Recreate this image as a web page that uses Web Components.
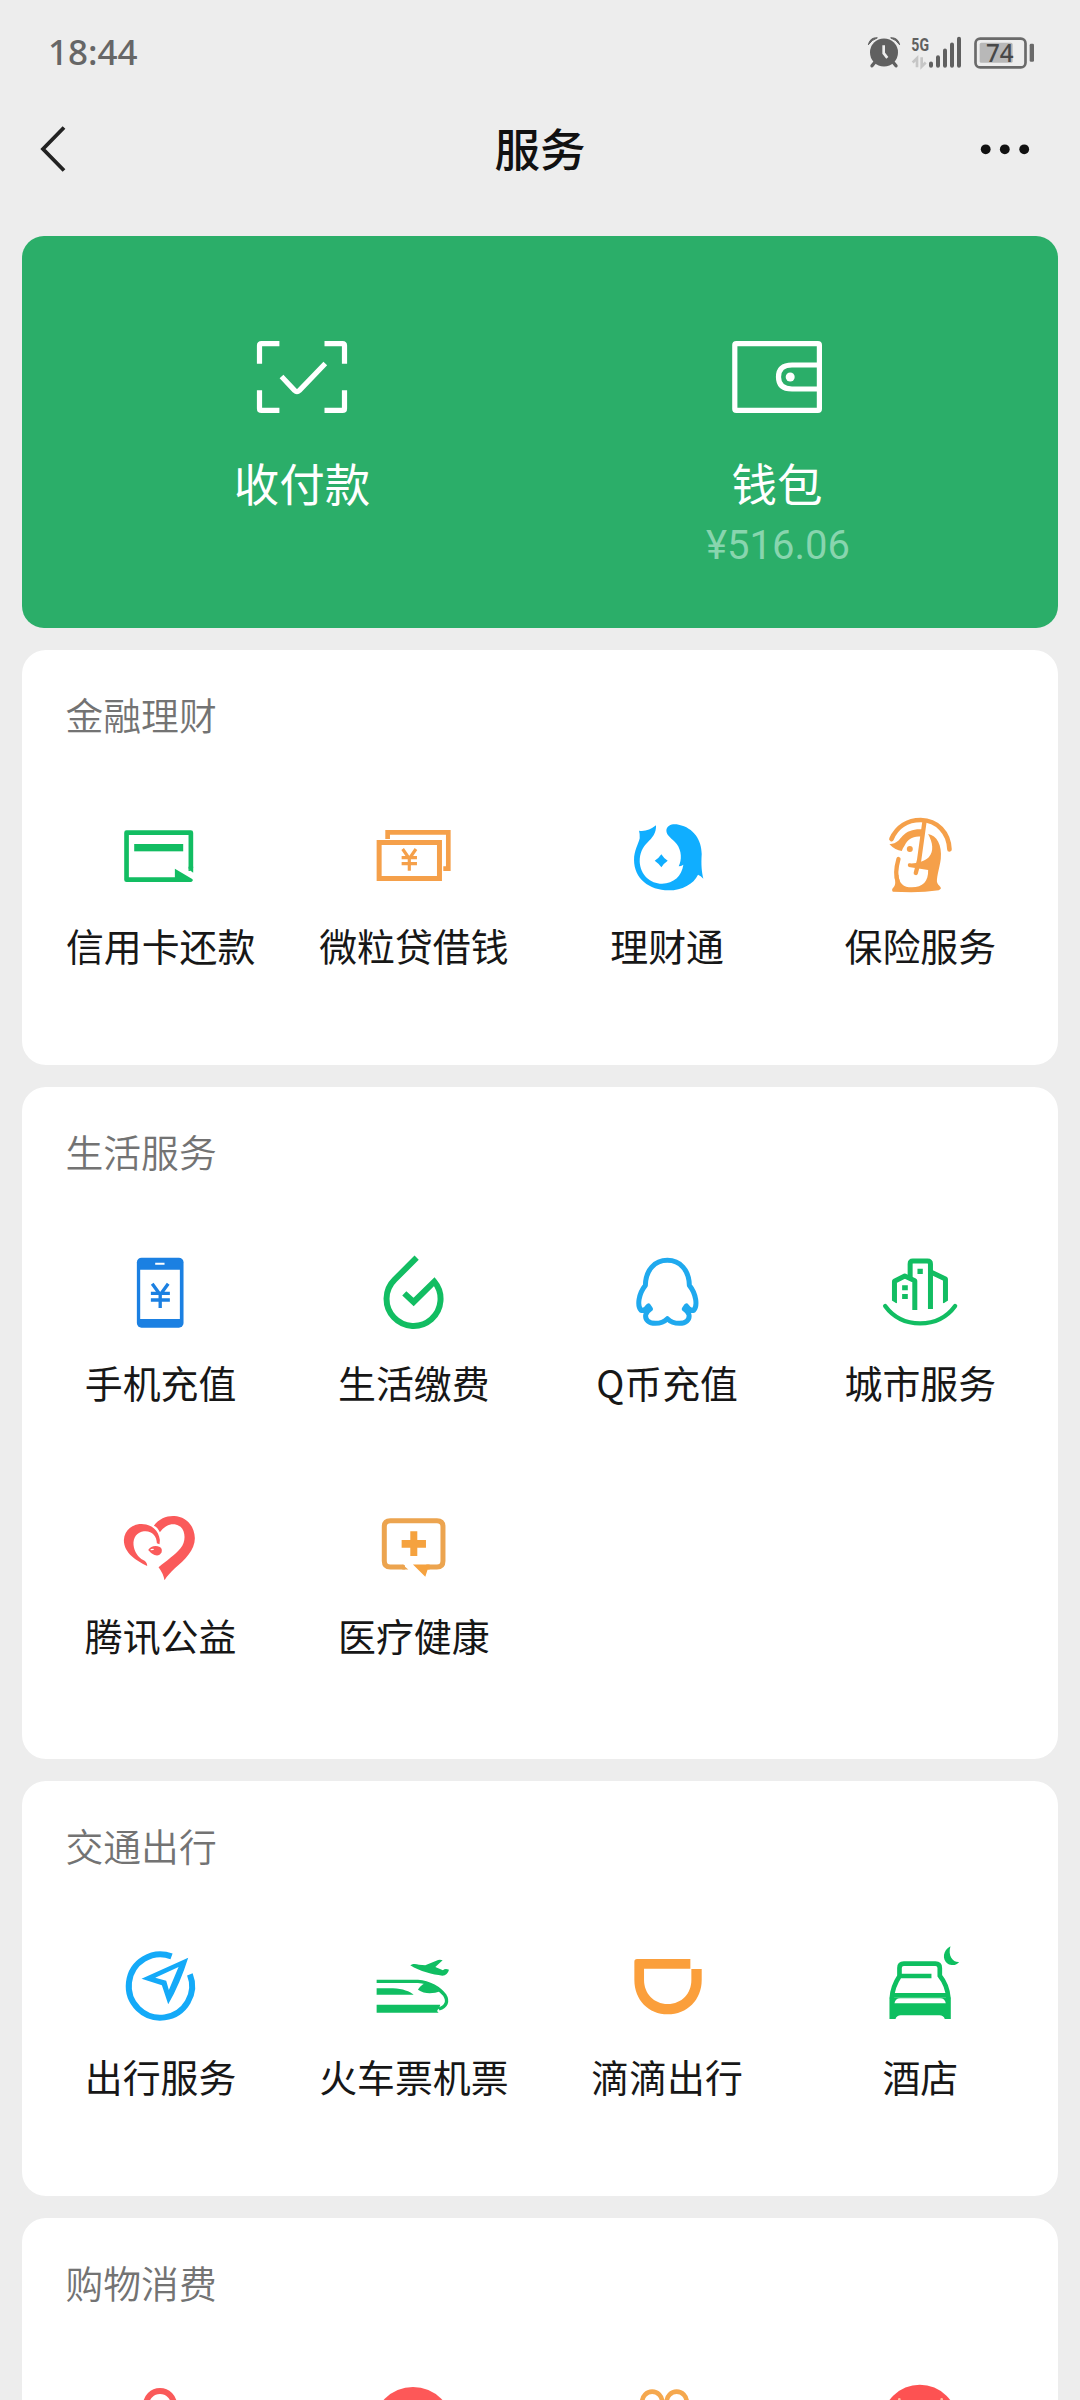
<!DOCTYPE html>
<html lang="zh-CN">
<head>
<meta charset="utf-8">
<title>服务</title>
<style>
html,body{margin:0;padding:0}
body{width:1080px;height:2400px;overflow:hidden;background:#ededed;font-family:"Noto Sans CJK SC",sans-serif;color:#171717}
</style>
</head>
<body>
<services-page></services-page>
<script>
const G='#12bd62', O='#f5a04a', B='#14aaf8', R='#fa5a5a';
// Each icon: [viewBox x, viewBox y, markup]; every viewBox is 288 units wide and high.
const ICONS={
card:[276.4,501,`<path d="M513 693V578H320V719H472" fill="none" stroke="${G}" stroke-width="14" stroke-linejoin="round"/><path d="M504 686l18 13v-16z" fill="#fff"/><path d="M506 680v8l14 10v-18z" fill="${G}"/><path d="M465 686V726H514Q522 722 517 717Z" fill="${G}"/><rect x="343" y="612" width="147" height="22" fill="${G}"/>`],
loan:[1036.1,501,`<g fill="none" stroke="${O}"><rect x="1078.5" y="607.5" width="181" height="108" stroke-width="15"/><path d="M1104 597V577H1286V686H1271" stroke-width="14"/><path d="M1149 627L1169 656L1189 627M1169 655V692M1146 653H1192M1146 671H1192" stroke-width="9.500"/></g>`],
fund:[175.9,81,`<path fill="#10aeff" d="M236 152Q262 156 287 136C288 160 275 174 262 187C246 203 238 220 238 245C240 285 270 311 305 311C340 310 364 288 369 254Q362 259 355 259C365 240 364 212 349 192C336 175 317 168 318 150C320 134 338 130 355 134C400 143 424 180 424 222C422 255 424 276 429 296Q421 287 413 284C400 312 365 331 325 331C266 331 221 295 221 240C221 212 234 192 238 175Q239 162 236 152Z"/><path fill="#10aeff" d="M303 223Q310 235 322 242Q310 250 303 262Q295 250 283 242Q295 235 303 223Z"/>`],
insure:[935.6,81,`<g fill="${O}"><path d="M994 177C1010 140 1042 120 1082 120C1132 121 1166 158 1168 208" fill="none" stroke="${O}" stroke-width="14" stroke-linecap="round"/><path d="M1015 237C1008 262 1004 285 1013 305" fill="none" stroke="${O}" stroke-width="13" stroke-linecap="round"/><path d="M988 193C1012 190 1016 180 1027 168C1042 152 1062 146 1088 148L1084 170C1060 166 1042 178 1034 196C1029 203 1027 208 1025 213C1012 212 1000 206 988 193Z"/><circle cx="1049" cy="207" r="9"/><path d="M1104 162C1130 166 1146 196 1142 236C1139 262 1126 300 1132 310C1136 318 1143 320 1142 326L1136 331C1090 338 1040 337 998 335C994 330 996 326 1001 321C1008 314 1004 300 1007 288L1015 284C1016 310 1030 322 1055 322C1088 322 1105 304 1104 270L1080 266L1046 261Q1040 255 1046 250C1066 252 1090 246 1106 232C1122 213 1118 188 1104 162Z"/><path d="M1093 125L1077 240L1067 279" fill="none" stroke="${O}" stroke-width="13" stroke-linecap="round"/></g>`],
phone:[156.4,42,`<rect x="231" y="83" width="140" height="210" rx="14" fill="#1b80e2"/><path fill="#fff" d="M241 119h119v148H241zM286 98h28v6h-28z"/><path d="M277 161L301 194L325 161M301 190V234M273 190H330M273 210H330" fill="none" stroke="#1b80e2" stroke-width="10"/>`],
drop:[916.1,42,`<path d="M1071 83L1005 149A81 81 0 1 0 1124 155L1062 216L1034 190" fill="none" stroke="${G}" stroke-width="18"/>`],
qq:[175.9,42,`<g fill="none" stroke="#1fa9ee" stroke-width="15" stroke-linejoin="round"><path d="M321 266C310 277 298 280 285 280C266 280 254 270 256 255C257 247 263 242 270 237L264 228C257 238 250 243 242 241C230 228 234 192 255 166C256 120 283 91 321 91C359 91 386 120 387 166C408 192 412 228 400 241C392 243 385 238 378 228L372 237C379 242 385 247 386 255C388 270 376 280 357 280C344 280 332 277 321 266Z"/></g>`],
city:[935.6,42,`<g fill="none" stroke="${G}" stroke-width="15"><path d="M975 228C1002 265 1040 280 1080 280C1120 280 1158 265 1185 228" stroke-width="13" stroke-linecap="round"/><path d="M1050 146V102Q1050 93 1058 93H1102Q1111 93 1111 102V237" /><path d="M1003 220V154L1034 138L1064 152V240M1112 126L1156 147V220" stroke-linejoin="round"/></g><path fill="${G}" d="M1072 116h16v16h-16zM1026 166h17v15h-17zM1026 192h17v15h-17z"/><path fill="#fff" d="M994 211l18 11v6h-18zM1147 222l18-11v17h-18z"/>`],
heart:[156.4,21,`<g fill="${R}"><path d="M262 228C230 212 192 190 192 150C194 118 220 102 245 102C275 102 297 122 300 150L299 163L291 160C291 138 275 121 252 124C232 127 219 142 221 165C223 185 235 203 250 210C258 214 262 220 262 228Z"/><path d="M282 107C298 86 320 77 343 78C380 80 404 108 405 145C405 180 375 210 345 235C332 247 322 258 314 271Q310 250 296 232C320 212 345 196 362 175C378 155 378 125 362 110C340 94 315 105 300 127C296 118 290 110 282 107Z"/><path d="M265 180C272 168 288 165 300 171C306 174 307 180 305 187C300 197 292 198 284 195C276 192 271 187 265 180Z"/></g><path d="M274 179L280 178" stroke="#fff" stroke-width="4" stroke-linecap="round"/>`],
medical:[916.1,21,`<path d="M1036 231H992Q974 231 974 213V110Q974 92 992 92H1132Q1150 92 1150 110V213Q1150 231 1132 231H1100" fill="none" stroke="#eca44f" stroke-width="15"/><path fill="#eca44f" d="M1028 223.5L1046 238.5H1028Z"/><path fill="#fff" d="M1031 222L1050 240V222Z"/><path fill="#f5a23f" d="M1060 223.5H1110V238.5H1104L1097 260ZM1052 124h21v26h26v23h-26v25h-21v-25h-26v-23h26z"/>`],
nav:[156.4,24,`<path d="M335 79A95 95 0 1 0 390 133" fill="none" stroke="${B}" stroke-width="18"/><path fill="${B}" fill-rule="evenodd" d="M385 83L245 146L306 166L325 223Q361 160 385 83ZM356 111L286 143L319 152L327 180Z"/>`],
train:[916.1,24,`<g fill="#10be62"><path d="M1052 106C1060 101 1068 102 1078 104L1097 106L1130 92Q1140 87 1149 91L1127 111L1150 121Q1156 114 1168 119Q1164 136 1148 137C1120 134 1080 124 1052 106Z"/><path d="M951 154H1075C1110 156 1140 175 1155 195C1167 214 1160 230 1138 237" fill="none" stroke="#10be62" stroke-width="10"/><path d="M1075 179C1085 165 1095 157 1110 160C1125 164 1135 172 1143 183C1120 192 1095 193 1075 179Z"/><path d="M951 175H1000C1030 176 1050 185 1062 194H951Z"/><path d="M951 224H1142L1138 236Q1128 242 1137 248H951Z"/></g>`],
didi:[175.9,24,`<path fill="#fb9f3b" d="M222 95Q222 87 230 87H390V116H251V150C251 190 280 222 322 222C365 222 393 190 393 150V117H424V150C424 210 380 253 322 253C265 253 222 210 222 150Z"/>`],
hotel:[935.6,24,`<g fill="#0ebf60"><path d="M1171 49C1148 60 1145 90 1163 101C1177 109 1190 105 1197 96C1180 98 1162 80 1171 49Z"/><path d="M1018 142V114Q1018 101 1031 101H1126Q1139 101 1139 114V137Q1162 165 1165 205M1019 137Q997 170 995 205M1000 196H1162M1022 138H1114" fill="none" stroke="#0ebf60" stroke-width="14"/><path d="M988 203H1172V267H1154Q1150 256 1138 256H1022Q1010 256 1006 267H988Z"/></g><path fill="#fff" d="M1003 220Q1006 205 1020 205H1140Q1154 205 1157 220Z"/>`],
bag:[0,0,`<path d="M102 110V90A42 42 0 0 1 186 90V110" fill="none" stroke="${R}" stroke-width="18"/>`],
disc:[0,0,`<circle cx="144" cy="156" r="120" fill="#fd5858"/>`],
gift:[0,0,`<g fill="none" stroke="#f5a84e" stroke-width="14"><circle cx="99.500" cy="80" r="30"/><circle cx="173" cy="80" r="30"/></g>`],
disc2:[0,0,`<circle cx="143.500" cy="142" r="113" fill="#fd5252"/><circle cx="82" cy="73" r="4" fill="#ffc0a0"/><circle cx="209" cy="73" r="4" fill="#ffc0a0"/>`]
};
const define=(name,html)=>customElements.define(name,class extends HTMLElement{
  constructor(){super();this.attachShadow({mode:'open'})}
  connectedCallback(){
    const t=document.createElement('template');
    t.innerHTML=typeof html==='function'?html(this):html;
    this.shadowRoot.replaceChildren(t.content.cloneNode(true));
  }
});
define('status-bar',`<style>
:host{display:flex;flex:none;justify-content:space-between;height:88px;padding:0 44px 0 48px;color:#666;box-sizing:border-box}
time{font:500 35px/48px "Noto Sans","Open Sans",sans-serif;padding-top:28px}
svg{width:172px;height:34px;margin-top:35.5px;overflow:visible}
</style>
<time>18:44</time>
<svg viewBox="72 76.5 516 102">
<g fill="#606060"><circle cx="132" cy="126" r="42"/><path d="M85 103Q90 80 112 82Q95 88 85 103ZM179 103Q174 80 152 82Q169 88 179 103Z" stroke="#606060" stroke-width="3"/><path d="M104 156l-8 10M160 156l8 10" stroke="#606060" stroke-width="10" stroke-linecap="round"/></g>
<path d="M131 104V128L142 142" fill="none" stroke="#ededed" stroke-width="8"/>
<text x="214" y="121" font-family="Roboto" font-weight="700" font-size="57" textLength="53" lengthAdjust="spacingAndGlyphs" fill="#606060">5G</text>
<path d="M218 156L231 143V170M245 140V168L257 156" fill="none" stroke="#c6c6c6" stroke-width="8"/>
<g stroke="#606060" stroke-width="12" stroke-linecap="round"><path d="M273 159V166M294 140V166M315 120V166M336 102V166M357 85V166"/></g>
<rect x="406.500" y="84.500" width="150" height="86" rx="14" fill="none" stroke="#6a6a6a" stroke-width="8"/>
<rect x="419" y="97" width="99" height="60" rx="5" fill="#b8b8b8"/><rect x="569" y="100" width="13" height="54" rx="4" fill="#6a6a6a"/>
<text x="438" y="153" font-family="Noto Sans" font-weight="500" font-size="76" textLength="83" lengthAdjust="spacingAndGlyphs" fill="#484848">74</text>
</svg>`);
define('nav-header',`<style>
:host{display:flex;flex:none;align-items:center;justify-content:space-between;height:122px;padding:0 40px;box-sizing:border-box;margin-bottom:26px}
svg{width:60px;height:60px;display:block}
h1{margin:0 0 4px;font-size:45.500px;line-height:64px;font-weight:500;color:#111}
</style>
<svg viewBox="40 119 60 60"><path d="M64 127.500L43 149L64 170.500" fill="none" stroke="#222" stroke-width="3.800"/></svg>
<h1><slot></slot></h1>
<svg viewBox="980 119 60 60"><g fill="#111"><circle cx="985.700" cy="149.300" r="4.900"/><circle cx="1004.800" cy="149.300" r="4.900"/><circle cx="1024.200" cy="149.300" r="4.900"/></g></svg>`);
define('pay-panel',`<style>
:host{display:flex;height:392px;border-radius:22px;background:#2bae69;padding:0 43.500px 0 42.500px;box-sizing:border-box;margin-bottom:22px}
</style><slot></slot>`);
define('pay-entry',el=>`<style>
:host{flex:1;display:flex;flex-direction:column;align-items:center;color:#fff;padding-top:101px}
svg{width:100px;height:80px;display:block}
b{font-weight:400;font-size:45.500px;line-height:66px;margin-top:32px}
i{font:400 40px/50px Roboto,sans-serif;color:#88d5ae;margin-top:6px;padding-left:2px}
</style>
${el.getAttribute('icon')==='scan'
?`<svg viewBox="252 337 100 80" fill="none" stroke="#fff" stroke-width="5.200"><path d="M279.400 343.600H261.500Q259.500 343.600 259.500 345.600V363.700M324.500 343.600H342.500Q344.500 343.600 344.500 345.600V363.700M279.400 410.400H261.500Q259.500 410.400 259.500 408.400V390.300M324.500 410.400H342.500Q344.500 410.400 344.500 408.400V390.300"/><path d="M281.500 376.500L294.500 390.300Q297 392.600 299.500 390.300L325.300 363.500"/></svg>`
:`<svg viewBox="727 337 100 80" fill="none" stroke="#fff" stroke-width="5.200"><rect x="734.800" y="343.600" width="84.600" height="66.800" rx="1.500"/><path d="M819 365H792Q778.500 365 778.500 377Q778.500 389 792 389H819"/><circle cx="790.200" cy="377" r="4.500" fill="#fff" stroke="none"/></svg>`}
<b>${el.getAttribute('label')}</b>${el.hasAttribute('amount')?`<i>${el.getAttribute('amount')}</i>`:''}`);
define('service-card',el=>`<style>
:host{display:block;height:415px;background:#fff;border-radius:24px;box-sizing:border-box;padding:36px 11.500px 0;margin-bottom:22px}
:host([rows="2"]){height:672px}
h2{margin:0 0 65px;padding-left:32px;font-size:37.800px;line-height:56px;font-weight:350;color:#737373}
div{display:grid;grid-template-columns:repeat(4,1fr);grid-auto-rows:253px}
</style><h2>${el.getAttribute('heading')}</h2><div><slot></slot></div>`);
define('service-tile',el=>{const [x,y,m]=ICONS[el.getAttribute('icon')];return `<style>
:host{display:flex;flex-direction:column;align-items:center}
svg{width:96px;height:96px;display:block;flex:none}
span{font-size:37.900px;line-height:56px;margin-top:13.500px;padding-left:1px;white-space:nowrap;color:#171717}
</style><svg viewBox="${x} ${y} 288 288">${m}</svg><span><slot></slot></span>`});
define('services-page',`<style>
:host{display:flex;flex-direction:column;height:2400px;overflow:hidden}
main{padding:0 22px;flex:none}
</style>
<status-bar></status-bar>
<nav-header>服务</nav-header>
<main>
<pay-panel><pay-entry icon="scan" label="收付款"></pay-entry><pay-entry icon="wallet" label="钱包" amount="¥516.06"></pay-entry></pay-panel>
<service-card heading="金融理财"><service-tile icon="card">信用卡还款</service-tile><service-tile icon="loan">微粒贷借钱</service-tile><service-tile icon="fund">理财通</service-tile><service-tile icon="insure">保险服务</service-tile></service-card>
<service-card heading="生活服务" rows="2"><service-tile icon="phone">手机充值</service-tile><service-tile icon="drop">生活缴费</service-tile><service-tile icon="qq">Q币充值</service-tile><service-tile icon="city">城市服务</service-tile><service-tile icon="heart">腾讯公益</service-tile><service-tile icon="medical">医疗健康</service-tile></service-card>
<service-card heading="交通出行"><service-tile icon="nav">出行服务</service-tile><service-tile icon="train">火车票机票</service-tile><service-tile icon="didi">滴滴出行</service-tile><service-tile icon="hotel">酒店</service-tile></service-card>
<service-card heading="购物消费"><service-tile icon="bag"></service-tile><service-tile icon="disc"></service-tile><service-tile icon="gift"></service-tile><service-tile icon="disc2"></service-tile></service-card>
</main>`);
</script>
</body>
</html>
